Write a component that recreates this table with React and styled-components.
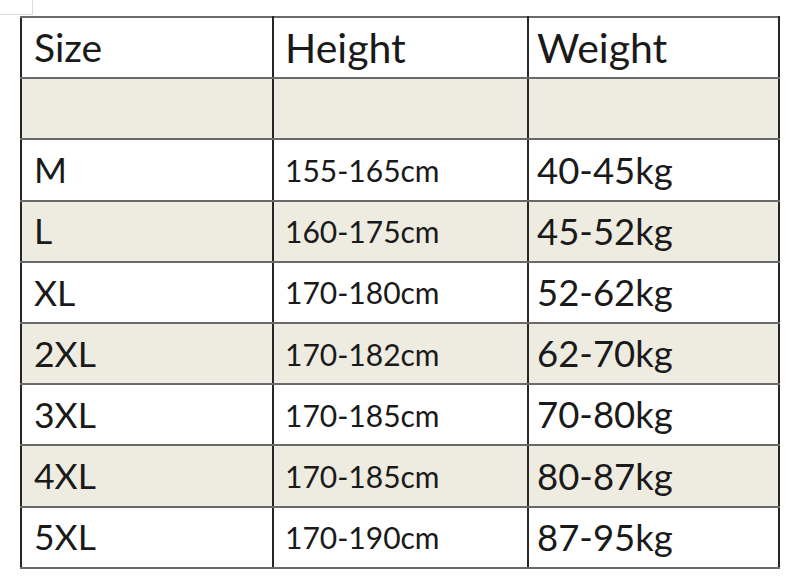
import styled, { createGlobalStyle } from 'styled-components'

const GlobalStyle = createGlobalStyle`
  html, body {
    margin: 0;
    padding: 0;
    background: #ffffff;
  }
  body {
    font-family: Lato, "Noto Sans", sans-serif;
    color: #1a1a1a;
  }
`

const Page = styled.div`
  position: relative;
  width: 800px;
  height: 586px;
  padding: 16px 0 0 20px;
  box-sizing: border-box;
  overflow: hidden;
`

// page corner mark, as in a Word document
const CornerMark = styled.div`
  position: absolute;
  left: 0;
  top: 0;
  width: 32px;
  height: 14px;
  border-right: 1px solid #dcdcdc;
  border-bottom: 1px solid #dcdcdc;
`

const Table = styled.table`
  border-collapse: collapse;
  width: 758px;
  table-layout: fixed;
`

const Row = styled.tr`
  height: 61.2px;
  background: ${props => props.$shaded ? '#eeece1' : '#ffffff'};
`

const Cell = styled.td`
  padding: 0 0 0 ${props => props.$pad || 11}px;
  border-left: 2px solid #262626;
  border-right: 2px solid #262626;
  border-top: 2px solid #6a6a6a;
  border-bottom: 2px solid #6a6a6a;
  font-size: ${props => props.$size || 36}px;
  line-height: 1;
  white-space: nowrap;
  vertical-align: middle;
`

const rows = [
  ['M', '155-165cm', '40-45kg'],
  ['L', '160-175cm', '45-52kg'],
  ['XL', '170-180cm', '52-62kg'],
  ['2XL', '170-182cm', '62-70kg'],
  ['3XL', '170-185cm', '70-80kg'],
  ['4XL', '170-185cm', '80-87kg'],
  ['5XL', '170-190cm', '87-95kg'],
]

export default function App() {
  return (
    <>
      <GlobalStyle />
      <Page>
        <CornerMark />
        <Table>
          <colgroup>
            <col style={{ width: 252 }} />
            <col style={{ width: 255 }} />
            <col style={{ width: 251 }} />
          </colgroup>
          <tbody>
            <Row>
              <Cell $pad={12} $size={39}>Size</Cell>
              <Cell $size={41}>Height</Cell>
              <Cell $pad={8} $size={41}>Weight</Cell>
            </Row>
            <Row $shaded>
              <Cell />
              <Cell />
              <Cell />
            </Row>
            {rows.map((r, i) => (
              <Row key={r[0]} $shaded={i % 2 === 1}>
                <Cell $pad={12} $size={35.5}>{r[0]}</Cell>
                <Cell $size={30}>{r[1]}</Cell>
                <Cell $pad={8} $size={36.5}>{r[2]}</Cell>
              </Row>
            ))}
          </tbody>
        </Table>
      </Page>
    </>
  )
}
